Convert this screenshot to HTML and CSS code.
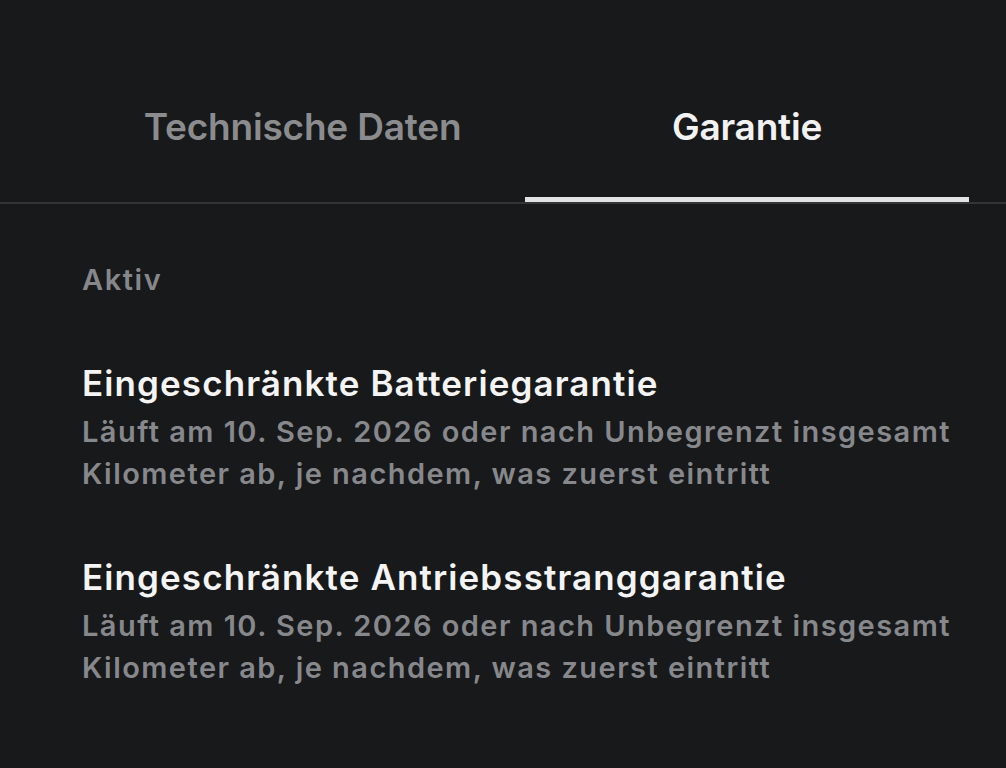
FILE: index.html
```html
<!DOCTYPE html>
<html lang="de">
<head>
<meta charset="utf-8">
<title>Garantie</title>
<link rel="stylesheet" href="styles.css">
</head>
<body>
<div class="tabs">
  <div class="tab">Technische Daten</div>
  <div class="tab active">Garantie</div>
</div>
<main class="content">
  <div class="section-label">Aktiv</div>
  <div class="item">
    <div class="item-title">Eingeschränkte Batteriegarantie</div>
    <div class="item-desc">Läuft am 10. Sep. 2026 oder nach Unbegrenzt insgesamt Kilometer ab, je nachdem, was zuerst eintritt</div>
  </div>
  <div class="item">
    <div class="item-title">Eingeschränkte Antriebsstranggarantie</div>
    <div class="item-desc">Läuft am 10. Sep. 2026 oder nach Unbegrenzt insgesamt Kilometer ab, je nachdem, was zuerst eintritt</div>
  </div>
</main>
</body>
</html>
```

FILE: styles.css
```css
html, body {
  margin: 0;
  padding: 0;
  background: #17191b;
  height: 100%;
}
body {
  font-family: Inter, "Noto Sans", sans-serif;
  -webkit-font-smoothing: antialiased;
}
.tabs {
  display: grid;
  grid-template-columns: 445px 444px;
  padding-left: 80px;
  border-bottom: 2px solid #323436;
}
.tab {
  padding-top: 105px;
  padding-bottom: 48px;
  border-bottom: 5px solid transparent;
  font-size: 37px;
  line-height: 44px;
  font-weight: 600;
  color: #8b8c8e;
  text-align: center;
  letter-spacing: -0.2px;
}
.tab.active {
  color: #f2f2f2;
  border-bottom-color: #e2e2e2;
}
.content {
  padding: 59px 20px 0 82px;
}
.section-label {
  font-size: 29px;
  line-height: 34px;
  font-weight: 600;
  letter-spacing: 1.55px;
  color: #86878a;
  margin-bottom: 66px;
}
.item {
  margin-bottom: 62px;
}
.item-title {
  font-size: 35px;
  line-height: 40px;
  font-weight: 600;
  letter-spacing: 1.1px;
  color: #f4f4f4;
  margin-bottom: 8px;
}
.item-desc {
  font-size: 29px;
  line-height: 42px;
  font-weight: 600;
  letter-spacing: 1.45px;
  color: #87888b;
  max-width: 890px;
}
```
